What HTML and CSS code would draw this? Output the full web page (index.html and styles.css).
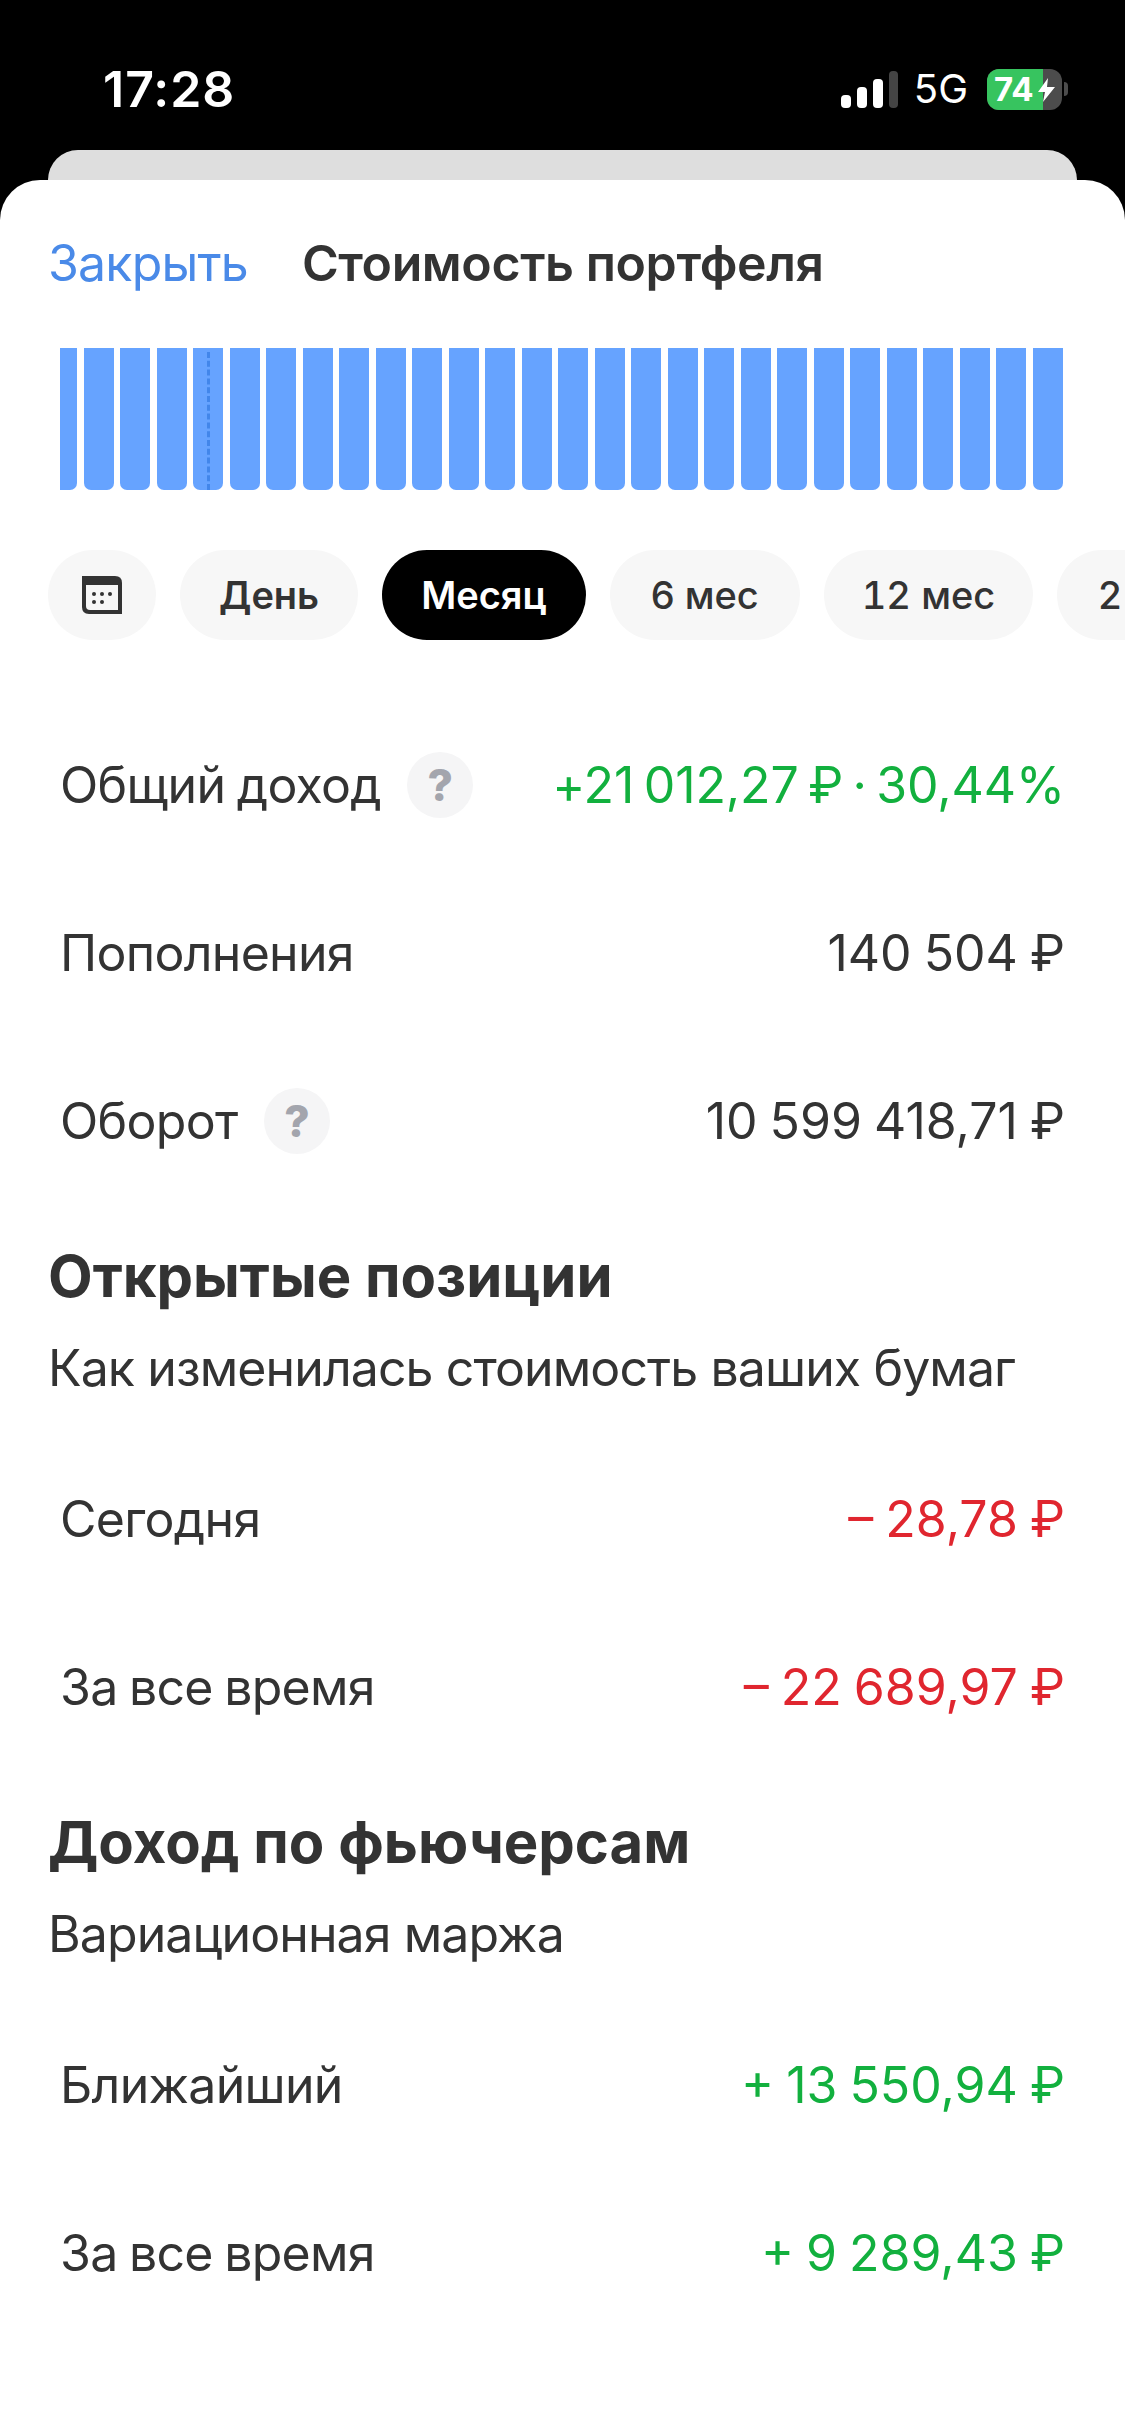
FILE: index.html
```
<!DOCTYPE html>
<html lang="ru">
<head>
<meta charset="utf-8">
<title>Стоимость портфеля</title>
<link rel="stylesheet" href="styles.css">
</head>
<body>
<div class="phone">
  <header class="status">
    <span class="time">17:28</span>
    <div class="status-right">
      <svg class="signal" width="57" height="37" viewBox="0 0 57 37"><rect x="0" y="24" width="10" height="13" rx="4" fill="#fff"/><rect x="16" y="16" width="10" height="21" rx="4" fill="#fff"/><rect x="32" y="8" width="10" height="29" rx="4" fill="#fff"/><rect x="48" y="0" width="9" height="37" rx="4" fill="#444"/></svg>
      <span class="net">5G</span>
      <div class="battery"><div class="battery-fill"></div><span class="battery-text">74</span>
        <svg class="bolt" width="17" height="24" viewBox="0 0 17 24"><path d="M10 0 L0 14 H7 L5 24 L17 9 H9 Z" fill="#fff"/></svg>
      </div>
      <div class="battery-cap"></div>
    </div>
  </header>
  <div class="back-card"></div>
  <main class="sheet">
    <div class="top">
      <span class="close">Закрыть</span>
      <span class="title">Стоимость портфеля</span>
    </div>
    <div class="bars">
      <div class="bar first"></div><div class="bar"></div><div class="bar"></div><div class="bar"></div><div class="bar"></div><div class="bar"></div><div class="bar"></div><div class="bar"></div><div class="bar"></div><div class="bar"></div><div class="bar"></div><div class="bar"></div><div class="bar"></div><div class="bar"></div><div class="bar"></div><div class="bar"></div><div class="bar"></div><div class="bar"></div><div class="bar"></div><div class="bar"></div><div class="bar"></div><div class="bar"></div><div class="bar"></div><div class="bar"></div><div class="bar"></div><div class="bar"></div><div class="bar"></div><div class="bar"></div>
    </div>
    <div class="chips">
      <div class="chip chip-icon">
        <svg width="40" height="38" viewBox="0 0 40 38"><path d="M0 0H33Q40 0 40 7V38H7Q0 38 0 31Z" fill="#333"/><path d="M4 9H36V34H8Q4 34 4 30Z" fill="#f7f7f7"/><circle cx="12" cy="18" r="2" fill="#333"/><circle cx="20" cy="18" r="2" fill="#333"/><circle cx="28" cy="18" r="2" fill="#333"/><circle cx="12" cy="26" r="2" fill="#333"/><circle cx="20" cy="26" r="2" fill="#333"/></svg>
      </div>
      <div class="chip">День</div>
      <div class="chip active">Месяц</div>
      <div class="chip plain">6 мес</div>
      <div class="chip plain tab">12 мес</div>
      <div class="chip plain">2 года</div>
    </div>
    <section class="rows rows-first">
      <div class="row"><div class="label">Общий доход <span class="help">?</span></div><div class="val val-tight green">+21 012,27 ₽ · 30,44%</div></div>
      <div class="row"><div class="label">Пополнения</div><div class="val">140 504 ₽</div></div>
      <div class="row"><div class="label">Оборот <span class="help">?</span></div><div class="val">10 599 418,71 ₽</div></div>
    </section>
    <h2 class="heading">Открытые позиции</h2>
    <p class="sub">Как изменилась стоимость ваших бумаг</p>
    <section class="rows rows-tail">
      <div class="row"><div class="label">Сегодня</div><div class="val red">– 28,78 ₽</div></div>
      <div class="row"><div class="label">За все время</div><div class="val red">– 22 689,97 ₽</div></div>
    </section>
    <h2 class="heading">Доход по фьючерсам</h2>
    <p class="sub">Вариационная маржа</p>
    <section class="rows rows-tail">
      <div class="row"><div class="label">Ближайший</div><div class="val green">+ 13 550,94 ₽</div></div>
      <div class="row"><div class="label">За все время</div><div class="val green">+ 9 289,43 ₽</div></div>
    </section>
  </main>
</div>
</body>
</html>
```
FILE: styles.css
```
* { box-sizing: border-box; }
html, body { margin: 0; padding: 0; background: #000; }
body { font-family: Inter, "Liberation Sans", sans-serif; color: #333; }
.phone { width: 1125px; height: 2436px; overflow: hidden; background: #000; display: flex; flex-direction: column; }

.status { height: 150px; flex: none; display: flex; justify-content: space-between; align-items: flex-start; padding: 60px 57px 0 103px; color: #fff; }
.time { font-size: 50px; font-weight: 600; line-height: 58px; letter-spacing: 1px; }
.status-right { display: flex; align-items: center; height: 58px; }
.signal { margin-right: 16px; }
.net { font-size: 40px; font-weight: 400; line-height: 58px; margin-right: 19px; }
.battery { position: relative; width: 75px; height: 41px; border-radius: 12px; background: #4c4c4c; overflow: hidden; display: flex; align-items: center; }
.battery-fill { position: absolute; left: 0; top: 0; bottom: 0; width: 56px; background: #37c45f; }
.battery-text { position: relative; font-size: 33px; font-weight: 700; color: #fff; margin-left: 7px; line-height: 41px; }
.bolt { position: absolute; left: 51px; top: 9px; }
.battery-cap { width: 4px; height: 14px; margin-left: 2px; border-radius: 0 4px 4px 0; background: #4c4c4c; }

.back-card { height: 30px; flex: none; margin: 0 48px; background: #dedede; border-radius: 30px 30px 0 0; }
.sheet { flex: 1; background: #fff; border-radius: 40px 40px 0 0; overflow: hidden; padding-top: 53px; }

.top { display: flex; align-items: center; gap: 54px; padding-left: 48px; height: 60px; }
.close { font-size: 50px; color: #4a8ae8; letter-spacing: -0.8px; }
.title { font-size: 50px; font-weight: 600; color: #333; letter-spacing: -0.4px; }

.bars { display: flex; gap: 6.5px; height: 142px; margin: 55px 0 0 60px; }
.bar { width: 30px; flex: none; background: #66a3ff; border-radius: 0 0 7px 7px; }
.bar.first { width: 17px; border-radius: 0 0 7px 0; }
.bars .bar:nth-child(5) { position: relative; }
.bars .bar:nth-child(5)::after { content: ""; position: absolute; left: 14px; top: 4px; bottom: 0; border-left: 3px dashed #4286ea; }

.chips { display: flex; gap: 24px; margin: 60px 0 0 48px; height: 90px; }
.chip { flex: none; height: 90px; padding: 0 39px; border-radius: 45px; background: #f7f7f7; display: flex; align-items: center; font-size: 38px; font-weight: 600; color: #333; }
.chip-icon { width: 108px; padding: 0; justify-content: center; }
.chip.active { background: #000; color: #fff; }
.chip.plain { font-weight: 500; padding: 0 41px; }
.chip.tab { font-variant-numeric: tabular-nums; padding: 0 38px; }

.rows-first { margin-top: 61px; }
.rows-tail { margin-top: 38px; }
.row { height: 168px; display: flex; align-items: center; justify-content: space-between; padding: 0 60px; font-size: 50px; letter-spacing: -0.7px; word-spacing: -2px; }
.label { display: flex; align-items: center; gap: 26px; }
.val { text-align: right; letter-spacing: 0; }
.val-tight { word-spacing: -4.5px; letter-spacing: -0.1px; }
.green { color: #12b03e; }
.red { color: #e0262f; }
.help { width: 66px; height: 66px; border-radius: 50%; background: #f5f5f6; color: #a3a5ad; font-size: 44px; font-weight: 800; display: flex; align-items: center; justify-content: center; }

.heading { margin: 36px 0 0; padding-left: 48px; font-size: 58px; font-weight: 700; line-height: 70px; color: #333; }
.sub { margin: 28px 0 0; padding-left: 48px; font-size: 50px; line-height: 58px; color: #333; letter-spacing: -0.9px; }
```
